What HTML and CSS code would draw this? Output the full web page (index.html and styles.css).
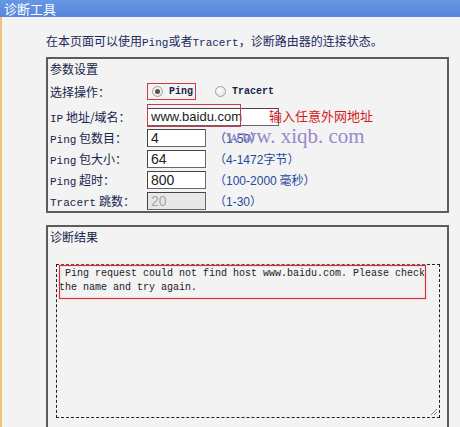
FILE: index.html
```html
<!DOCTYPE html>
<html lang="zh-CN">
<head>
    <meta charset="UTF-8">
    <title>诊断工具</title>
    <link rel="stylesheet" href="styles.css">
</head>
<body>
    <div class="titlebar">诊断工具</div>

    <div class="main">
        <p class="intro">在本页面可以使用<span class="lat">Ping</span>或者<span class="lat">Tracert</span>，诊断路由器的连接状态。</p>

        <div class="panel params">
            <div class="panel-title">参数设置</div>
            <div class="form">
                <div class="row first">
                    <label>选择操作：</label>
                    <div class="ops">
                        <span class="opt marked"><span class="radio on"></span><span class="lat b">Ping</span></span>
                        <span class="opt"><span class="radio"></span><span class="lat b">Tracert</span></span>
                    </div>
                </div>
                <div class="row">
                    <label><span class="lat">IP</span> 地址/域名：</label>
                    <input class="field wide" type="text" value="www.baidu.com">
                    <span class="ip-mark"></span>
                    <span class="note">输入任意外网地址</span>
                </div>
                <div class="row">
                    <label><span class="lat">Ping</span> 包数目：</label>
                    <input class="field" type="text" value="4">
                    <span class="hint">（<span class="num">1-50</span>）</span>
                </div>
                <div class="row">
                    <label><span class="lat">Ping</span> 包大小：</label>
                    <input class="field" type="text" value="64">
                    <span class="hint">（<span class="num">4-1472</span>字节）</span>
                </div>
                <div class="row">
                    <label><span class="lat">Ping</span> 超时：</label>
                    <input class="field" type="text" value="800">
                    <span class="hint">（<span class="num">100-2000</span> 毫秒）</span>
                </div>
                <div class="row">
                    <label><span class="lat">Tracert</span> 跳数：</label>
                    <input class="field" type="text" value="20" disabled>
                    <span class="hint">（<span class="num">1-30</span>）</span>
                </div>
            </div>
        </div>

        <div class="panel result">
            <div class="panel-title">诊断结果</div>
            <div class="output">
                <div class="msg"> Ping request could not find host www.baidu.com. Please check<br>the name and try again.</div>
                <span class="msg-mark"></span>
                <svg class="grip" width="8" height="8" viewBox="0 0 8 8">
                    <path d="M7 1 L1 7 M7 4 L4 7" stroke="#888" stroke-width="1" fill="none"/>
                </svg>
            </div>
        </div>
    </div>

    <div class="watermark">www. xiqb. com</div>
</body>
</html>
```

FILE: styles.css
```css
* {
    margin: 0;
    padding: 0;
    box-sizing: border-box;
}

body {
    font-family: "Noto Sans CJK SC", sans-serif;
    font-size: 12px;
    color: #16244a;
    background-color: #f3f3f3;
    width: 460px;
    height: 427px;
    overflow: hidden;
    position: relative;
}

.lat {
    font-family: "Liberation Mono", monospace;
    font-size: 11px;
}

.lat.b {
    font-weight: bold;
    font-size: 10px;
}

.titlebar {
    height: 17px;
    line-height: 17px;
    background: linear-gradient(#6797e4, #5586dc);
    color: #fff;
    font-size: 13px;
    padding-left: 4px;
}

.main {
    border-left: 2px solid #f2c27c;
    padding-left: 44px;
    padding-top: 16px;
    height: 410px;
}

.intro {
    line-height: 16px;
    height: 16px;
    color: #1a2a5e;
}

.panel {
    width: 403px;
    border: 2px solid #5c5c5c;
    margin-top: 8px;
}

.panel-title {
    line-height: 16px;
    padding: 2px 0 0 2px;
}

.form {
    margin-top: 4px;
    padding-left: 2px;
}

.row {
    display: flex;
    align-items: center;
    height: 21px;
    position: relative;
}

.row.first {
    margin-bottom: 4px;
}

.row label {
    width: 97px;
    flex-shrink: 0;
}

.ops {
    display: flex;
    align-items: center;
}

.opt {
    display: flex;
    align-items: center;
    padding: 2px 2px 2px 4px;
    margin-right: 15px;
    border: 1px solid transparent;
}

.opt.marked {
    border-color: #d23a3a;
    margin-right: 14px;
}

.radio {
    width: 11px;
    height: 11px;
    border-radius: 50%;
    border: 1px solid #a0a0a0;
    background: radial-gradient(circle at 40% 35%, #ffffff 0%, #dcdcdc 100%);
    margin-right: 6px;
    position: relative;
}

.radio.on::after {
    content: "";
    position: absolute;
    left: 2px;
    top: 2px;
    width: 5px;
    height: 5px;
    border-radius: 50%;
    background-color: #555;
}

.field {
    width: 59px;
    height: 18px;
    border: 1px solid #666;
    border-top-color: #444;
    border-left-color: #444;
    background-color: #fff;
    font-family: "Liberation Sans", Arial, sans-serif;
    font-size: 14px;
    color: #222;
    padding-left: 3px;
    outline: none;
}

.field.wide {
    width: 132px;
    font-size: 13px;
}

.field:disabled {
    background-color: #e8e8e8;
    color: #a6a6a6;
}

.ip-mark {
    position: absolute;
    left: 97px;
    top: -2px;
    width: 94px;
    height: 23px;
    border: 1px solid #c83a4a;
}

.note {
    position: absolute;
    left: 219px;
    top: 2px;
    color: #d21c1c;
    font-size: 13px;
    line-height: 16px;
}

.hint {
    margin-left: 8px;
    color: #1f4a9c;
}

.num {
    font-family: "Liberation Sans", Arial, sans-serif;
    font-size: 12px;
}

.result {
    margin-top: 12px;
    height: 220px;
}

.output {
    margin: 19px 7px 0 8px;
    border: 1px dashed #222;
    height: 154px;
    position: relative;
    padding: 2px 2px;
}

.msg {
    font-family: "Liberation Mono", monospace;
    font-size: 10px;
    line-height: 14px;
    color: #222;
    white-space: pre;
}

.msg-mark {
    position: absolute;
    left: 2px;
    top: 0;
    width: 367px;
    height: 34px;
    border: 1px solid #d0303a;
    box-shadow: inset 0 0 2px #f4b0b0, 0 0 2px #f4b0b0;
}

.grip {
    position: absolute;
    right: 1px;
    bottom: 1px;
}

.watermark {
    position: absolute;
    left: 226px;
    top: 124px;
    font-family: "Liberation Serif", serif;
    font-size: 21px;
    color: #9a88cc;
    white-space: pre;
}
```
